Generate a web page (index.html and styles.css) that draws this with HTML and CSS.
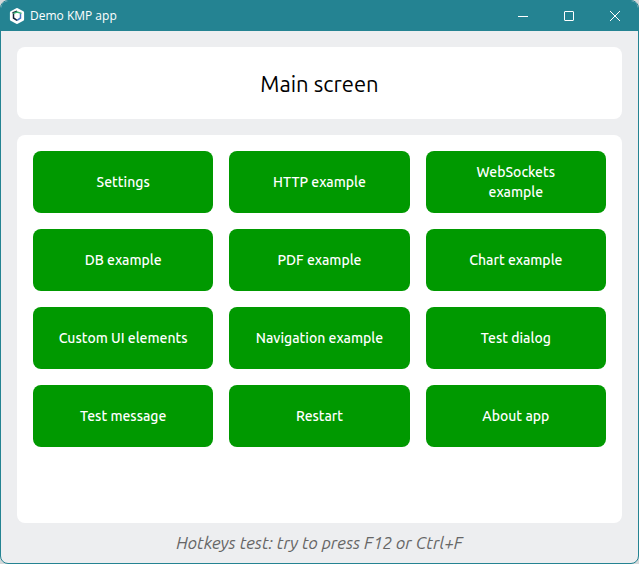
FILE: index.html
```html
<!DOCTYPE html>
<html lang="en">
<head>
<meta charset="utf-8">
<title>Demo KMP app</title>
<link rel="stylesheet" href="styles.css">
</head>
<body>
<div class="window">
  <header class="titlebar">
    <svg class="logo" viewBox="0 0 16 16" aria-hidden="true">
      <path d="M8 1.5 13.6 4.6V11.4L8 14.5 2.4 11.4V4.6Z" fill="#fff" stroke="#fff" stroke-width="3" stroke-linejoin="round"/>
      <path d="M4.5 5.5V10L8 12.3" fill="none" stroke="#14233a" stroke-width="1.5"/>
      <path d="M8 12.3 11.5 10V5.5" fill="none" stroke="#4a78c4" stroke-width="1.5"/>
      <path d="M3.5 5 8 3.2" fill="none" stroke="#14233a" stroke-width="1.4"/>
      <path d="M4.5 5.4 8 4 12.5 5.4" fill="none" stroke="#3bb273" stroke-width="1.4"/>
    </svg>
    <span class="caption">Demo KMP app</span>
    <button class="control" type="button" aria-label="Minimize"><svg viewBox="0 0 10 10"><path d="M0 5.5H10"/></svg></button>
    <button class="control" type="button" aria-label="Maximize"><svg viewBox="0 0 10 10"><rect x="0.5" y="0.5" width="9" height="9" rx="0.5"/></svg></button>
    <button class="control" type="button" aria-label="Close"><svg viewBox="0 0 10 10"><path d="M0 0 10 10M10 0 0 10"/></svg></button>
  </header>
  <main class="content">
    <h1 class="card heading">Main screen</h1>
    <section class="card menu">
      <button class="action" type="button">Settings</button>
      <button class="action" type="button">HTTP example</button>
      <button class="action" type="button">WebSockets example</button>
      <button class="action" type="button">DB example</button>
      <button class="action" type="button">PDF example</button>
      <button class="action" type="button">Chart example</button>
      <button class="action" type="button">Custom UI elements</button>
      <button class="action" type="button">Navigation example</button>
      <button class="action" type="button">Test dialog</button>
      <button class="action" type="button">Test message</button>
      <button class="action" type="button">Restart</button>
      <button class="action" type="button">About app</button>
    </section>
    <p class="hint">Hotkeys test: try to press F12 or Ctrl+F</p>
  </main>
</div>
</body>
</html>
```
FILE: styles.css
```css
* {
  box-sizing: border-box;
}

body {
  margin: 0;
  background: #d5d9da;
  font-family: Ubuntu, "Noto Sans", sans-serif;
}

.window {
  display: flex;
  flex-direction: column;
  min-height: 100vh;
  border: 1px solid #248392;
  border-radius: 8px;
  background: #edeef0;
  overflow: hidden;
}

.titlebar {
  display: flex;
  align-items: center;
  height: 30px;
  padding-left: 8px;
  background: #248392;
  color: #fff;
}

.logo {
  width: 16px;
  height: 16px;
  margin-right: 5px;
}

.caption {
  flex: 1;
  font-family: "Segoe UI", "Open Sans", sans-serif;
  font-size: 12px;
  line-height: 16px;
}

.control {
  display: flex;
  align-items: center;
  justify-content: center;
  width: 46px;
  height: 28px;
  padding: 0;
  border: 0;
  background: none;
}

.control svg {
  width: 10px;
  height: 10px;
  overflow: visible;
  fill: none;
  stroke: #fff;
}

.content {
  flex: 1;
  display: flex;
  flex-direction: column;
  gap: 16px;
  padding: 16px 16px 0;
}

.card {
  margin: 0;
  border-radius: 8px;
  background: #fff;
}

.heading {
  padding: 22px 16px 20px;
  color: #000;
  font-size: 22px;
  font-weight: 400;
  line-height: 30px;
  text-align: center;
}

.menu {
  flex: 1;
  display: grid;
  grid-template-columns: repeat(3, 1fr);
  grid-auto-rows: 62px;
  gap: 16px;
  padding: 16px;
}

.action {
  padding: 8px 24px;
  border: 0;
  border-radius: 8px;
  background: #009900;
  color: #fff;
  font-family: inherit;
  font-size: 14px;
  font-weight: 500;
  line-height: 20px;
}

.hint {
  margin: -16px 0 0;
  padding: 8px 0;
  color: #666;
  font-size: 17px;
  font-style: italic;
  line-height: 24px;
  text-align: center;
}
```
